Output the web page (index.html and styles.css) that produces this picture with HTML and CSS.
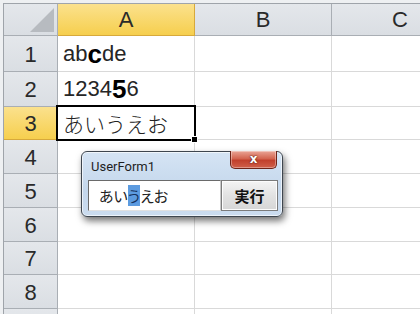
FILE: index.html
```html
<!DOCTYPE html>
<html lang="ja">
<head>
<meta charset="utf-8">
<link rel="stylesheet" href="styles.css">
</head>
<body>
<div class="viewport">
<div class="sheet">
  <div class="hd corner"><svg class="tri" width="24" height="24" viewBox="0 0 24 24"><polygon points="24,0 24,24 0,24" fill="#b7bbc0"/></svg></div>
  <div class="hd col sel-hd">A</div>
  <div class="hd col">B</div>
  <div class="hd col">C</div>

  <div class="hd row">1</div>
  <div class="cell txt">ab<b class="big">c</b>de</div>
  <div class="cell"></div><div class="cell"></div>

  <div class="hd row">2</div>
  <div class="cell txt">1234<b class="big">5</b>6</div>
  <div class="cell"></div><div class="cell"></div>

  <div class="hd row sel-hd">3</div>
  <div class="cell txt jp active">あいうえお<span class="handle"></span></div>
  <div class="cell"></div><div class="cell"></div>

  <div class="hd row">4</div><div class="cell"></div><div class="cell"></div><div class="cell"></div>
  <div class="hd row">5</div><div class="cell"></div><div class="cell"></div><div class="cell"></div>
  <div class="hd row">6</div><div class="cell"></div><div class="cell"></div><div class="cell"></div>
  <div class="hd row">7</div><div class="cell"></div><div class="cell"></div><div class="cell"></div>
  <div class="hd row">8</div><div class="cell"></div><div class="cell"></div><div class="cell"></div>
  <div class="hd row"></div><div class="cell"></div><div class="cell"></div><div class="cell"></div>
</div>

<div class="dialog">
  <div class="title">UserForm1</div>
  <div class="close">x</div>
  <div class="client">
    <div class="textbox">あい<span class="hl">う</span>えお</div>
    <div class="button">実行</div>
  </div>
</div>
</div>
</body>
</html>
```
FILE: styles.css
```css
html, body {
  margin: 0;
  padding: 0;
  background: #eef0f2;
}

.viewport {
  position: relative;
  width: 420px;
  height: 314px;
  overflow: hidden;
}

.sheet {
  display: grid;
  grid-template-columns: 54px 137px 137px 137px;
  grid-template-rows: 32px 36px 35px 33px 34px 34px 34px 33px 34px 34px;
  margin: 3px 0 0 3px;
  border-top: 1px solid #9fa4aa;
  border-left: 1px solid #9fa4aa;
  width: max-content;
  background: #fff;
}

.hd {
  box-sizing: border-box;
  background: linear-gradient(#e4e7eb, #dadee3);
  border-right: 1px solid #a9aeb4;
  border-bottom: 1px solid #a9aeb4;
  display: flex;
  align-items: center;
  justify-content: center;
  font-family: "Liberation Sans", Arial, sans-serif;
  font-size: 22px;
  color: #2a2a2a;
}

.hd.col {
  padding-top: 1px;
}

.hd.row {
  padding-top: 2px;
}

.corner {
  position: relative;
  align-items: flex-end;
  justify-content: flex-end;
  padding: 0 3px 3px 0;
}

.tri {
  display: block;
}

.sel-hd {
  background: linear-gradient(#fbe18d, #f6cf4e);
  border-right-color: #d7a93b;
  border-bottom-color: #d7a93b;
}

.cell {
  box-sizing: border-box;
  border-right: 1px solid #d9d9d9;
  border-bottom: 1px solid #d9d9d9;
  background: #fff;
}

.txt {
  display: flex;
  align-items: center;
  padding-left: 5px;
  font-family: "Liberation Sans", Arial, sans-serif;
  font-size: 22px;
  color: #262626;
  white-space: nowrap;
}

.big {
  font-size: 26px;
  font-weight: bold;
  line-height: 1;
  color: #000;
}

.jp {
  font-family: "Noto Sans CJK JP", sans-serif;
  font-weight: 300;
  font-size: 21px;
  color: #222;
}

.active {
  position: relative;
}

.active::after {
  content: "";
  position: absolute;
  left: -2px;
  top: -2px;
  right: -2px;
  bottom: -2px;
  border: 2px solid #000;
  pointer-events: none;
}

.handle {
  position: absolute;
  right: -4px;
  bottom: -4px;
  width: 5px;
  height: 5px;
  background: #000;
  border: 1px solid #fff;
  z-index: 2;
}

.dialog {
  position: absolute;
  left: 81px;
  top: 151px;
  width: 202px;
  height: 66px;
  box-sizing: border-box;
  border: 1px solid #3e464f;
  border-radius: 6px;
  background: linear-gradient(#d5e4f4, #c4d7ec 60%, #cbdcef);
  box-shadow: inset 0 0 0 1px rgba(255,255,255,0.65), 2px 4px 7px rgba(0,0,0,0.55);
  padding: 0 4px 5px 6px;
  display: flex;
  flex-direction: column;
}

.title {
  height: 28px;
  padding-left: 3px;
  display: flex;
  align-items: center;
  font-family: Roboto, "Noto Sans", sans-serif;
  font-size: 13px;
  color: #1e1e1e;
}

.close {
  position: absolute;
  left: 148px;
  top: -1px;
  width: 47px;
  height: 18px;
  box-sizing: border-box;
  border: 1px solid #6e2418;
  border-top: none;
  border-radius: 0 0 5px 5px;
  background: linear-gradient(#eaa596, #d3644f 45%, #c1402c 55%, #d0604a);
  box-shadow: inset 0 0 0 1px rgba(255,255,255,0.35);
  display: flex;
  align-items: center;
  justify-content: center;
  font-family: "DejaVu Sans", sans-serif;
  font-weight: bold;
  font-size: 12px;
  line-height: 1;
  color: #fff;
  text-shadow: 0 0 2px #5a1a10, 0 0 1px #5a1a10;
  padding-bottom: 2px;
}

.client {
  display: flex;
  height: 31px;
}

.textbox {
  flex: 0 0 133px;
  box-sizing: border-box;
  border: 1px solid #6a6a6a;
  border-right-color: #c8c8c8;
  border-bottom-color: #e0e0e0;
  background: #fff;
  display: flex;
  align-items: center;
  padding-left: 10px;
  font-family: "Noto Sans CJK JP", sans-serif;
  font-feature-settings: "palt";
  font-size: 15px;
  color: #222;
}

.hl {
  background: #5c9be0;
  color: #16325e;
}

.button {
  flex: 1;
  box-sizing: border-box;
  border: 1px solid #7b7b7b;
  background: linear-gradient(#f4f4f4, #e2e2e2 50%, #d6d6d6);
  box-shadow: inset 0 0 0 1px #fcfcfc;
  display: flex;
  align-items: center;
  justify-content: center;
  font-family: "Noto Sans CJK JP", sans-serif;
  font-weight: bold;
  font-size: 15px;
  color: #111;
}
```
